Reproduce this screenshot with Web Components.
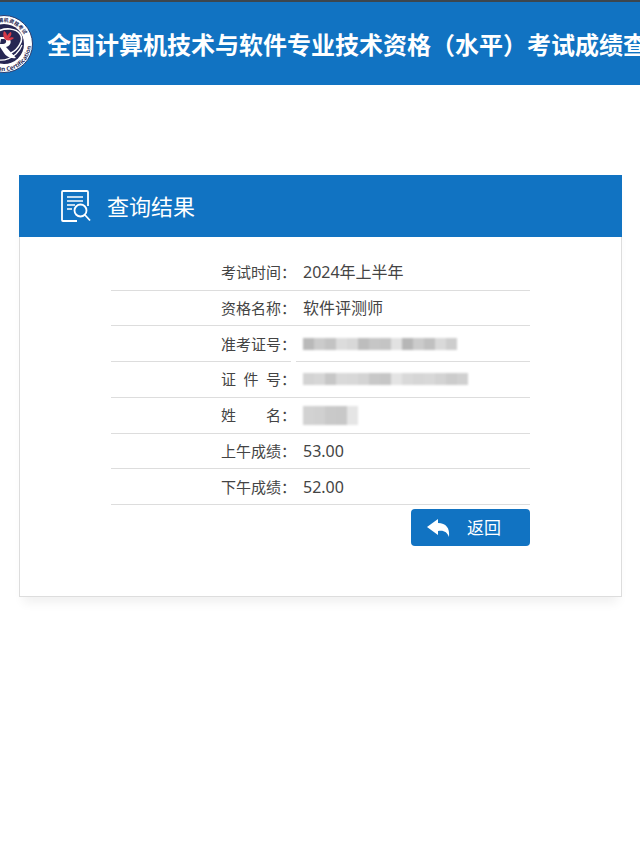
<!DOCTYPE html>
<html lang="zh-CN">
<head>
<meta charset="utf-8">
<meta name="viewport" content="width=device-width, initial-scale=1">
<title>考试成绩查询</title>
<style>
  body {
    margin: 0;
    background: #fff;
    color: #444;
    font-family: "Noto Sans", "Noto Sans CJK SC", sans-serif;
    overflow-x: hidden;
  }
  main { padding: 90px 18px 40px 19px; }
</style>
</head>
<body>
<page-banner>全国计算机技术与软件专业技术资格（水平）考试成绩查</page-banner>
<main>
  <result-card>
    <span slot="title">查询结果</span>
    <score-table></score-table>
    <back-button>返回</back-button>
  </result-card>
</main>

<script>
class ExamSeal extends HTMLElement {
  constructor() {
    super();
    this.attachShadow({ mode: 'open' }).innerHTML = `
      <style>
        :host { display: block; width: 58px; height: 58px; }
        svg { display: block; width: 100%; height: 100%; }
        text { font-family: "Noto Sans", "Noto Sans CJK SC", sans-serif; font-weight: bold; fill: #262653; }
      </style>
      <svg viewBox="0 0 58 58" aria-hidden="true">
        <defs>
          <path id="top" d="M7 29a22 22 0 0 1 44 0"/>
          <path id="bottom" d="M9.900 9.900A27 27 0 1 0 56 29"/>
        </defs>
        <circle cx="29" cy="29" r="28.500" fill="#fff" stroke="#2a3c70"/>
        <circle cx="29" cy="29" r="20" fill="#262653"/>
        <text font-size="5"><textPath href="#top" startOffset="86%" text-anchor="end">计算机资格考试</textPath></text>
        <text font-size="6"><textPath href="#bottom" startOffset="98%" text-anchor="end">Qualification Certification</textPath></text>
        <path d="M11 38C10 23 22 13 35 14c10 1 14 8 10 15-2 4-5 7-9 9" fill="none" stroke="#fff" stroke-width="1.600"/>
        <path d="M16 43c9 4 18 2 25-4 3-3 5-6 6-9" fill="none" stroke="#fff" stroke-width="1.200"/>
        <path d="M21 22h8c8 0 9 8 2 10l10 11c-6 1-10-2-12-5l-4-6-3 9h-4l5-17h-3z" fill="#fff"/>
        <path d="M26 24h3c3 0 3 5-1 5h-3z" fill="#262653"/>
        <path d="M29 23c-1-3-1-5 0-7 2 1 3 3 3 5 1-2 3-4 4-4 1 2 0 4-2 6 2-1 4-1 5 0-2 2-5 3-8 2z" fill="#d83a48"/>
      </svg>`;
  }
}

class PageBanner extends HTMLElement {
  constructor() {
    super();
    this.attachShadow({ mode: 'open' }).innerHTML = `
      <style>
        :host { display: block; }
        header {
          display: flex;
          align-items: center;
          gap: 14px;
          height: 83px;
          border-top: 2px solid #3c464e;
          background: #1173c2;
          overflow: hidden;
        }
        exam-seal { flex: none; margin-left: -25px; }
        h1 { margin: 0; padding-top: 2px; font-size: 24px; line-height: 36px; color: #fff; white-space: nowrap; }
      </style>
      <header>
        <exam-seal></exam-seal>
        <h1><slot></slot></h1>
      </header>`;
  }
}

class ResultCard extends HTMLElement {
  constructor() {
    super();
    this.attachShadow({ mode: 'open' }).innerHTML = `
      <style>
        :host { display: block; }
        section {
          border: 1px solid #ddd;
          border-top: 0;
          box-shadow: 0 10px 10px -4px rgba(0, 0, 0, 0.06);
        }
        .head {
          display: flex;
          align-items: center;
          gap: 16px;
          height: 62px;
          margin: 0 -1px;
          padding-left: 42px;
          background: #1173c2;
          color: #fff;
        }
        .head svg { width: 30px; height: 32px; }
        h2 { margin: 0; font-size: 22px; line-height: 32px; font-weight: normal; }
        .body {
          display: flex;
          flex-direction: column;
          align-items: flex-end;
          gap: 4px;
          padding: 18px 91px 50px;
        }
      </style>
      <section>
        <div class="head">
          <svg viewBox="0 0 30 32" fill="none" stroke="#fff" stroke-width="1.800" aria-hidden="true">
            <path d="M16 31H2q-1 0-1-1V2q0-1 1-1h24q1 0 1 1v14"/>
            <path d="M6 7h16M6 11h16M6 15h8M6 19h5" stroke-width="1.600"/>
            <circle cx="19.500" cy="20.500" r="6"/>
            <path d="M24 25l5 5.500"/>
          </svg>
          <h2><slot name="title"></slot></h2>
        </div>
        <div class="body"><slot></slot></div>
      </section>`;
  }
}

// Pixelated strip that hides a private value
class MaskedValue extends HTMLElement {
  connectedCallback() {
    const shades = this.getAttribute('shades').split(' ');
    const height = Number(this.getAttribute('height') || 12);
    const cells = shades.map((c, i) =>
      `<rect x="${i * 11}" width="11.500" height="${height}" fill="#${c}${c}${c}"/>`).join('');
    const width = shades.length * 11;
    this.attachShadow({ mode: 'open' }).innerHTML = `
      <style>
        :host { display: block; }
        svg { display: block; filter: blur(1px); }
      </style>
      <svg width="${width}" height="${height}" viewBox="0 0 ${width} ${height}" aria-hidden="true">${cells}</svg>`;
  }
}

class ScoreTable extends HTMLElement {
  constructor() {
    super();
    const rows = [
      ['考试时间：', '2024年上半年'],
      ['资格名称：', '软件评测师'],
      ['准考证号：', '<masked-value shades="b9 cb c3 dc d8 bd c6 c4 e2 b6 cb c0 d9 cd"></masked-value>', 'broken'],
      ['证\u2002件\u2002号：', '<masked-value shades="d3 d6 c7 d9 d8 d4 c8 c6 e4 d9 d6 d8 d3 cc d0"></masked-value>'],
      ['姓\u3000\u3000名：', '<masked-value height="19" shades="d2 d0 c9 c8 e5"></masked-value>'],
      ['上午成绩：', '53.00'],
      ['下午成绩：', '52.00']
    ];
    this.attachShadow({ mode: 'open' }).innerHTML = `
      <style>
        :host { display: block; width: 100%; }
        table { width: 100%; height: 250px; border-collapse: separate; border-spacing: 0; }
        th, td { padding: 0; border-bottom: 1px solid #ddd; line-height: 24px; }
        th {
          width: 185px;
          font-size: 15px;
          font-weight: normal;
          text-align: right;
          white-space: nowrap;
        }
        td { padding-left: 7px; font-size: 16px; }
        .broken th { border-image: linear-gradient(to right, #ddd calc(100% - 6px), transparent 0) 1; }
      </style>
      <table>
        <tbody>
          ${rows.map(([label, value, cls]) =>
            `<tr class="${cls || ''}"><th scope="row">${label}</th><td>${value}</td></tr>`).join('')}
        </tbody>
      </table>`;
  }
}

class BackButton extends HTMLElement {
  constructor() {
    super();
    this.attachShadow({ mode: 'open' }).innerHTML = `
      <style>
        :host { display: block; }
        button {
          display: flex;
          align-items: center;
          gap: 17px;
          height: 37px;
          padding: 0 29px 0 16px;
          border: 0;
          border-radius: 4px;
          background: #1173c2;
          color: #fff;
          font: 17px/24px "Noto Sans", "Noto Sans CJK SC", sans-serif;
          cursor: pointer;
        }
        svg { width: 23px; height: 18px; }
      </style>
      <button type="button">
        <svg viewBox="0 0 23 18" fill="#fff" aria-hidden="true">
          <path d="M0 8L11 0v4c8 0 12 5 11 14-2-5-5-7-11-6v4z"/>
        </svg>
        <slot></slot>
      </button>`;
    this.shadowRoot.querySelector('button').addEventListener('click', () => history.back());
  }
}

customElements.define('exam-seal', ExamSeal);
customElements.define('page-banner', PageBanner);
customElements.define('masked-value', MaskedValue);
customElements.define('score-table', ScoreTable);
customElements.define('back-button', BackButton);
customElements.define('result-card', ResultCard);
</script>
</body>
</html>
